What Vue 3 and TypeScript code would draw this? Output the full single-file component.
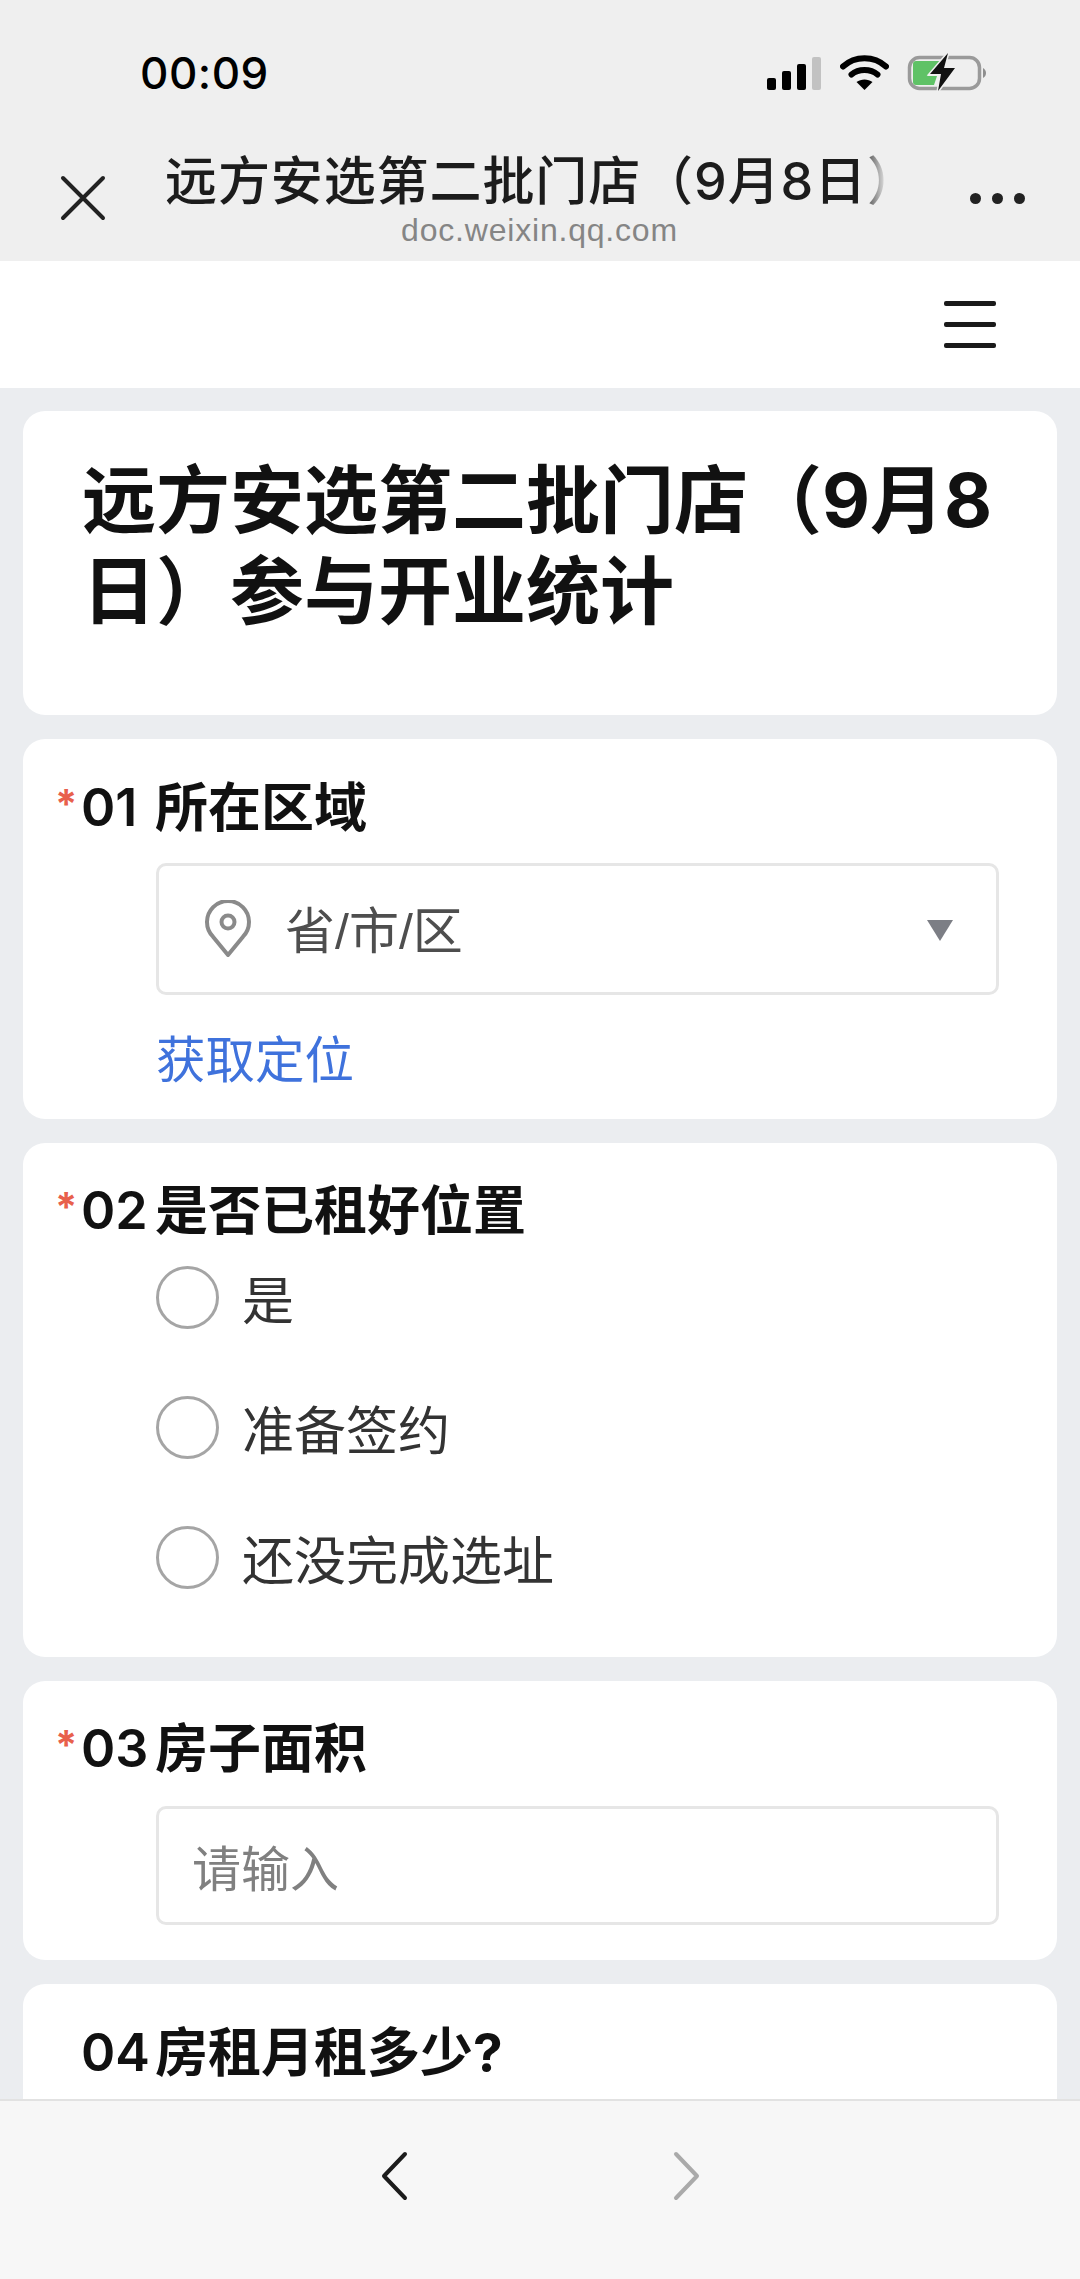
<script setup lang="ts">
const options: string[] = ['是', '准备签约', '还没完成选址']
</script>

<template>
  <div class="page">
    <header class="chrome">
      <div class="status">
        <span class="time">00:09</span>
        <div class="status-icons">
          <svg class="sig" width="55" height="33" viewBox="0 0 55 33">
            <rect x="0" y="21" width="9" height="12" rx="2" fill="#000" />
            <rect x="15" y="14" width="9" height="19" rx="2" fill="#000" />
            <rect x="30" y="7" width="9" height="26" rx="2" fill="#000" />
            <rect x="45" y="0" width="9" height="33" rx="2" fill="#c2c2c2" />
          </svg>
          <svg class="wifi" width="49" height="36" viewBox="0 0 49 36" fill="none" stroke="#000" stroke-width="6" stroke-linecap="round">
            <path d="M3 11.500C15 0.500 34 0.500 46 11.500" />
            <path d="M11.500 19.500C18.500 13.500 30.500 13.500 37.500 19.500" />
            <path d="M24.500 35L16.500 27C21 23.500 28 23.500 32.500 27Z" fill="#000" stroke="none" />
          </svg>
          <svg class="batt" width="80" height="40" viewBox="0 0 80 40">
            <rect x="3.500" y="4.500" width="70" height="31" rx="10" fill="none" stroke="#9a9a9a" stroke-width="3.500" />
            <path d="M7 11a3 3 0 0 1 3-3H35L21 23H31L28 32H10a3 3 0 0 1-3-3Z" fill="#5fc266" />
            <path d="M77 15C79 16 80 18 80 20C80 22 79 24 77 25Z" fill="#8e8e8e" />
            <path d="M42 0L24 21H35L32 38L49 15H38Z" fill="#111" stroke="#efefef" stroke-width="3" paint-order="stroke" />
          </svg>
        </div>
      </div>
      <div class="nav">
        <svg class="close" width="46" height="46" viewBox="0 0 46 46" fill="none" stroke="#222" stroke-width="4" stroke-linecap="round">
          <path d="M3 3L43 43M43 3L3 43" />
        </svg>
        <div class="nav-center">
          <div class="nav-title">远方安选第二批门店（9月8日）</div>
          <div class="nav-url">doc.weixin.qq.com</div>
        </div>
        <div class="dots"><i></i><i></i><i></i></div>
      </div>
    </header>

    <div class="toolbar">
      <div class="burger"><i></i><i></i><i></i></div>
    </div>

    <main class="content">
      <section class="card title-card">
        <h1>远方安选第二批门店（9月8日）参与开业统计</h1>
      </section>

      <section class="card q q1">
        <div class="q-title"><span class="star">*</span><span class="num">01</span><span>所在区域</span></div>
        <div class="body">
          <div class="select">
            <svg class="pin" width="48" height="58" viewBox="0 0 48 58" fill="none" stroke="#8a8a8a" stroke-width="4">
              <path d="M24 55L9 36.700A21 21 0 1 1 39 36.700Z" stroke-linejoin="round" />
              <circle cx="24" cy="22" r="6.500" />
            </svg>
            <span class="select-text">省/市/区</span>
            <span class="tri"></span>
          </div>
          <div class="link">获取定位</div>
        </div>
      </section>

      <section class="card q q2">
        <div class="q-title"><span class="star">*</span><span class="num">02</span><span>是否已租好位置</span></div>
        <div class="body radios">
          <div v-for="o in options" :key="o" class="radio">
            <span class="circle"></span>
            <span>{{ o }}</span>
          </div>
        </div>
      </section>

      <section class="card q q3">
        <div class="q-title"><span class="star">*</span><span class="num">03</span><span>房子面积</span></div>
        <div class="body">
          <div class="input">请输入</div>
        </div>
      </section>

      <section class="card q q4">
        <div class="q-title"><span class="star"></span><span class="num">04</span><span>房租月租多少?</span></div>
      </section>
    </main>

    <footer class="bottom">
      <svg width="30" height="50" viewBox="0 0 30 50" fill="none" stroke="#1c1c1c" stroke-width="4" stroke-linecap="round" stroke-linejoin="round">
        <path d="M26 3L5 25L26 47" />
      </svg>
      <svg width="30" height="50" viewBox="0 0 30 50" fill="none" stroke="#aaa" stroke-width="4" stroke-linecap="round" stroke-linejoin="round">
        <path d="M5 3L26 25L5 47" />
      </svg>
    </footer>
  </div>
</template>

<style>
html, body { margin: 0; padding: 0; }
</style>

<style scoped>
.page {
  width: 1080px;
  height: 2279px;
  display: flex;
  flex-direction: column;
  overflow: hidden;
  background: #ebedf0;
  font-family: Inter, "Noto Sans CJK SC", sans-serif;
  color: #111;
}
.chrome { height: 261px; background: #efefef; flex: none; }
.status {
  height: 146px;
  display: flex;
  align-items: center;
  justify-content: space-between;
  padding: 0 94px 0 140px;
}
.time { font-size: 44px; font-weight: 500; letter-spacing: 0.5px; color: #000; }
.status-icons { display: flex; align-items: center; }
.sig { margin-right: 18px; }
.wifi { margin-right: 17px; }
.nav {
  height: 115px;
  display: flex;
  align-items: flex-start;
  padding-left: 60px;
}
.close { margin-top: 29px; flex: none; }
.nav-center { width: 757px; margin-left: 59px; flex: none; display: flex; flex-direction: column; align-items: center; }
.nav-title {
  width: 100%;
  height: 70px;
  line-height: 72px;
  font-size: 52px;
  font-weight: 500;
  letter-spacing: 0.9px;
  white-space: nowrap;
  color: #1c1c1c;
  -webkit-mask-image: linear-gradient(to right, #000 695px, transparent 722px);
  mask-image: linear-gradient(to right, #000 695px, transparent 722px);
}
.nav-url { font-size: 32px; line-height: 36px; color: #858585; letter-spacing: 0.8px; margin-top: -4px; margin-left: -8px; font-family: "Liberation Sans", sans-serif; }
.dots { display: flex; gap: 11px; margin-left: 48px; margin-top: 47px; }
.dots i { width: 11px; height: 11px; border-radius: 50%; background: #222; display: block; }

.toolbar { height: 127px; background: #fff; flex: none; display: flex; align-items: center; justify-content: flex-end; padding-right: 84px; }
.burger { width: 52px; display: flex; flex-direction: column; gap: 16px; }
.burger i { display: block; height: 5px; border-radius: 2px; background: #1a1a1a; }

.content {
  flex: 1;
  min-height: 0;
  overflow: hidden;
  padding: 23px 23px 0;
  display: flex;
  flex-direction: column;
  gap: 24px;
}
.card { background: #fff; border-radius: 22px; flex: none; }
.title-card { height: 304px; box-sizing: border-box; padding: 44px 59px 0; }
.title-card h1 { margin: 0; font-size: 74px; line-height: 91px; font-weight: 700; color: #111; }

.q { box-sizing: border-box; padding: 38px 0 0 33px; }
.q-title { display: flex; height: 60px; line-height: 62px; font-size: 53px; font-weight: 700; color: #111; }
.star { width: 26px; margin-left: -1px; flex: none; color: #e8604c; font-weight: 700; font-size: 40px; line-height: 53px; }
.num { width: 74px; flex: none; font-size: 52px; font-weight: 600; }
.body { padding-left: 100px; padding-right: 36px; }

.q1 { height: 380px; }
.select {
  margin-top: 26px;
  height: 132px;
  box-sizing: border-box;
  width: 843px;
  border: 3px solid #e6e6e6;
  border-radius: 10px;
  display: flex;
  align-items: center;
  padding-left: 45px;
  padding-right: 43px;
}
.select-text { margin-left: 33px; margin-bottom: 5px; font-size: 50px; color: #4e4e4e; flex: 1; font-family: "Liberation Sans", "Noto Sans CJK SC", sans-serif; }
.tri { width: 0; height: 0; border-left: 13px solid transparent; border-right: 13px solid transparent; border-top: 21px solid #7c7e85; margin-top: 2px; }
.link { margin-top: 35px; font-size: 49.500px; line-height: 60px; color: #3f72dc; }

.q2 { height: 514px; padding-top: 37px; }
.radios { margin-top: 26px; display: flex; flex-direction: column; gap: 67px; }
.radio { display: flex; align-items: center; height: 63px; font-size: 52px; color: #333; gap: 23px; }
.circle { width: 63px; height: 63px; box-sizing: border-box; border: 3px solid #a5a5a5; border-radius: 50%; flex: none; }

.q3 { height: 279px; padding-top: 37px; }
.input {
  margin-top: 28px;
  width: 843px;
  height: 119px;
  box-sizing: border-box;
  border: 3px solid #e6e6e6;
  border-radius: 10px;
  line-height: 122px;
  padding-left: 33px;
  font-size: 49px;
  color: #808080;
}
.q4 { height: 200px; }

.bottom {
  height: 180px;
  flex: none;
  box-sizing: border-box;
  background: #f7f7f7;
  border-top: 2px solid #e2e2e2;
  display: flex;
  justify-content: center;
  gap: 262px;
  padding-top: 50px;
  z-index: 1;
}
</style>
